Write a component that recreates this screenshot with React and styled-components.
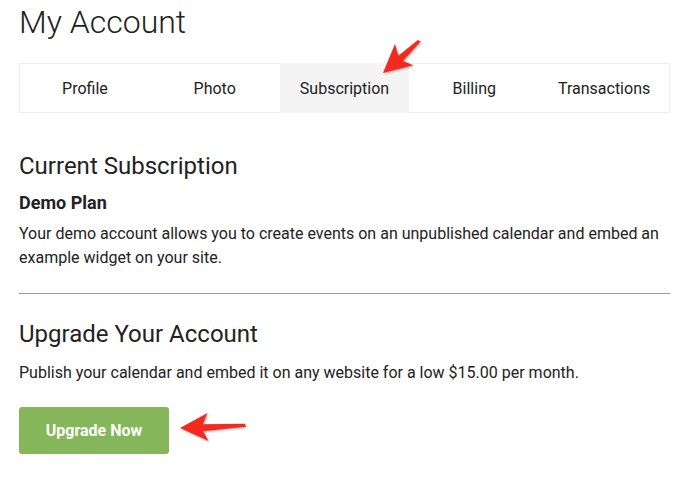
import styled, { createGlobalStyle } from "styled-components";

const GlobalStyle = createGlobalStyle`
  body {
    margin: 0;
    background: #fff;
    font-family: Roboto, "Liberation Sans", sans-serif;
    color: #222;
  }
`;

const Page = styled.div`
  position: relative;
  width: 695px;
  height: 478px;
  padding: 0 25px 0 19px;
  box-sizing: border-box;
`;

const Title = styled.h1`
  margin: 0;
  padding-top: 2px;
  font-size: 32px;
  font-weight: 300;
  line-height: 41px;
  color: #222;
`;

const Tabs = styled.nav`
  display: grid;
  grid-template-columns: repeat(5, 1fr);
  margin-top: 20px;
  height: 50px;
  border: 1px solid #eee;
  box-sizing: border-box;
`;

const Tab = styled.div`
  display: flex;
  align-items: center;
  justify-content: center;
  font-size: 16px;
  color: #222;
  background: ${(p) => (p.$active ? "#f4f4f4" : "transparent")};
  margin: ${(p) => (p.$active ? "-1px 0" : "0")};
`;

const Heading = styled.h2`
  margin: 0;
  font-size: 24px;
  font-weight: 400;
  line-height: 32px;
  color: #222;
`;

const Section = styled.section`
  padding-top: ${(p) => p.$top}px;
`;

const Plan = styled.h3`
  margin: 10px 0 0;
  font-size: 18px;
  font-weight: 700;
  line-height: 22px;
`;

const Text = styled.p`
  margin: ${(p) => p.$top || 6}px 0 0;
  font-size: 16px;
  line-height: 24px;
  color: #222;
`;

const Rule = styled.hr`
  margin: 23px 0 0;
  border: 0;
  border-top: 1px solid #999;
`;

const Button = styled.button`
  margin-top: 22px;
  width: 150px;
  height: 47px;
  border: 0;
  border-radius: 3px;
  background: #86b65a;
  color: #fff;
  font-family: Roboto, "Liberation Sans", sans-serif;
  font-size: 16px;
  font-weight: 700;
  cursor: pointer;
`;

const ArrowWrap = styled.svg`
  position: absolute;
  left: ${(p) => p.$x}px;
  top: ${(p) => p.$y - 15}px;
  overflow: visible;
  filter: drop-shadow(1px 1px 1px rgba(0, 0, 0, 0.3));
`;

function Arrow({ x, y, angle, length = 66 }) {
  const l = length;
  return (
    <ArrowWrap $x={x} $y={y} width={l} height="30" viewBox={`0 0 ${l} 30`}>
      <g transform={`rotate(${angle} 0 15)`}>
        <polygon
          points={`0,15 28,1 23,12 ${l},13 ${l + 1},16 23,19 28,29`}
          fill="#f42a1e"
        />
      </g>
    </ArrowWrap>
  );
}

const tabs = ["Profile", "Photo", "Subscription", "Billing", "Transactions"];

export default function App() {
  return (
    <>
      <GlobalStyle />
      <Page>
        <Title>My Account</Title>
        <Tabs>
          {tabs.map((t) => (
            <Tab key={t} $active={t === "Subscription"}>
              {t}
            </Tab>
          ))}
        </Tabs>
        <Section $top={37}>
          <Heading>Current Subscription</Heading>
          <Plan>Demo Plan</Plan>
          <Text $top={8}>
            Your demo account allows you to create events on an unpublished
            calendar and embed an example widget on your site.
          </Text>
        </Section>
        <Rule />
        <Section $top={24}>
          <Heading>Upgrade Your Account</Heading>
          <Text $top={11}>
            Publish your calendar and embed it on any website for a low $15.00
            per month.
          </Text>
          <Button>Upgrade Now</Button>
        </Section>
        <Arrow x={180} y={428} angle={-2} length={65} />
        <Arrow x={383} y={73} angle={-41} length={48} />
      </Page>
    </>
  );
}
